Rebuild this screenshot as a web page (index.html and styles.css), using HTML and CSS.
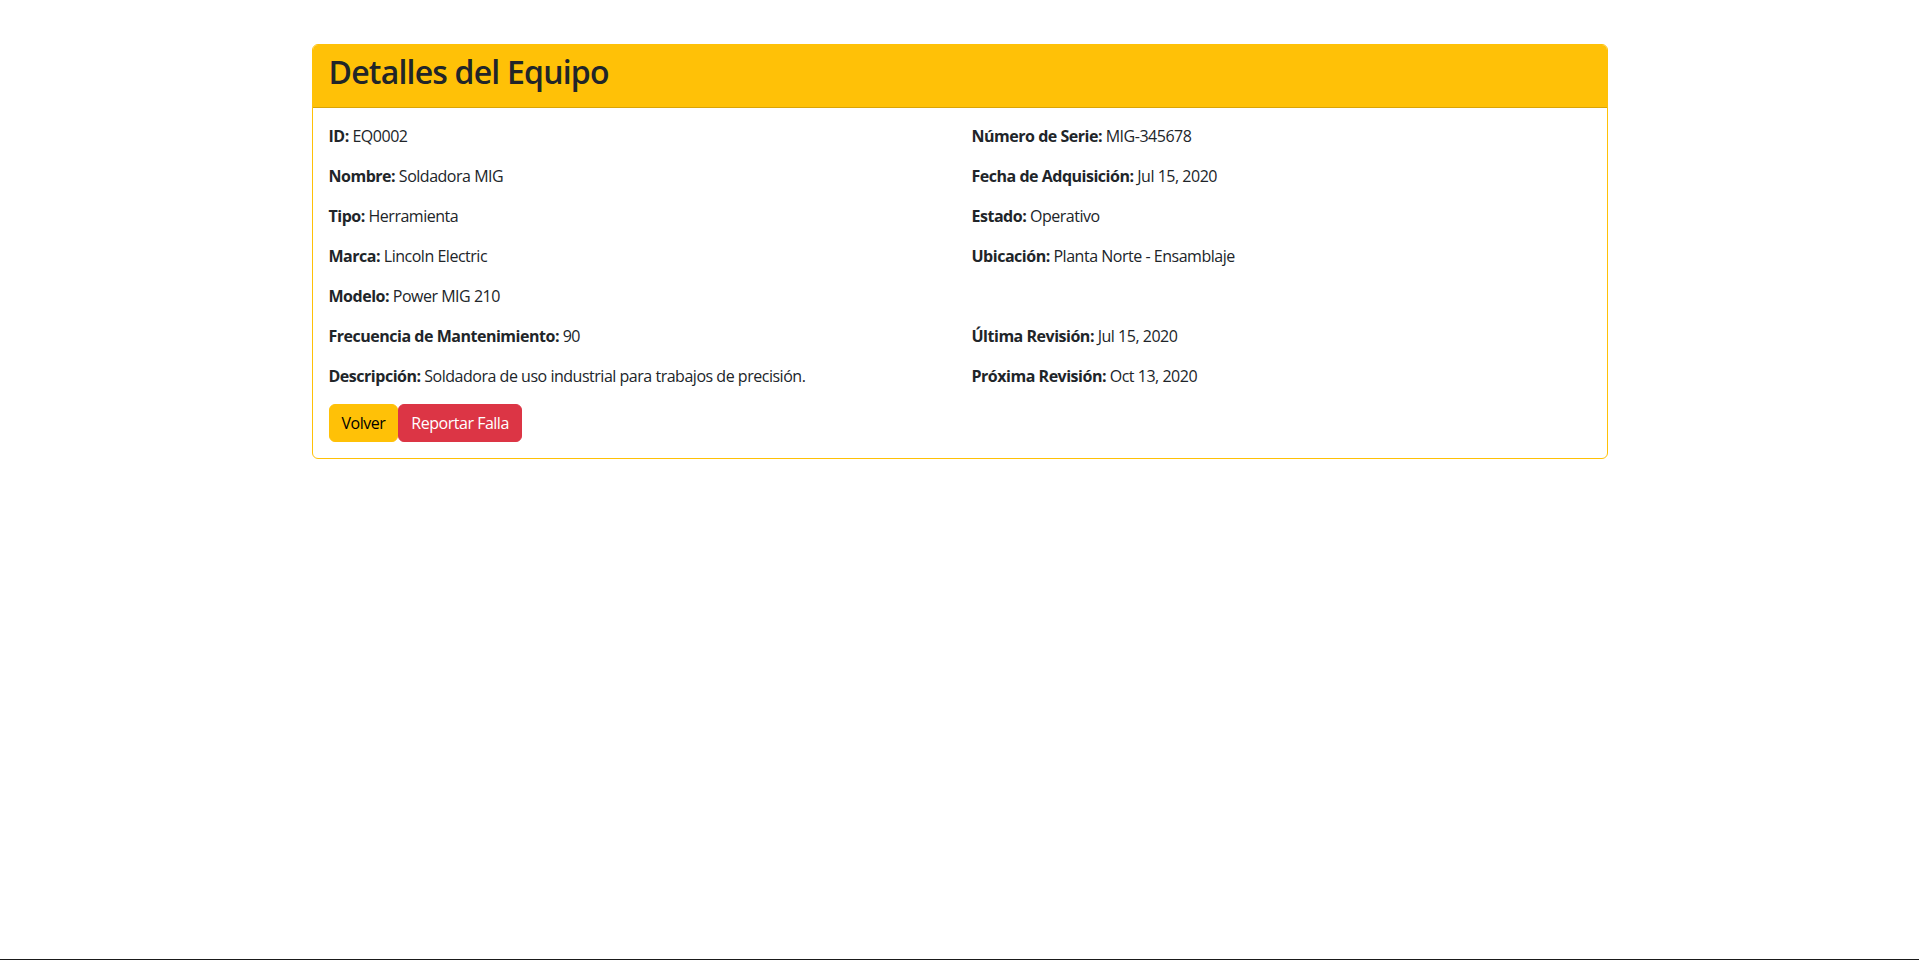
FILE: index.html
```html
<!DOCTYPE html>
<html lang="es">
<head>
<meta charset="utf-8">
<title>Detalles del Equipo</title>
<link rel="stylesheet" href="styles.css">
</head>
<body>
<main class="container">
  <section class="card">
    <header class="card-header">
      <h2 class="card-title">Detalles del Equipo</h2>
    </header>
    <div class="card-body">
      <div class="details">
        <p><strong>ID:</strong> EQ0002</p>
        <p><strong>Número de Serie:</strong> MIG-345678</p>
        <p><strong>Nombre:</strong> Soldadora MIG</p>
        <p><strong>Fecha de Adquisición:</strong> Jul 15, 2020</p>
        <p><strong>Tipo:</strong> Herramienta</p>
        <p><strong>Estado:</strong> Operativo</p>
        <p><strong>Marca:</strong> Lincoln Electric</p>
        <p><strong>Ubicación:</strong> Planta Norte - Ensamblaje</p>
        <p><strong>Modelo:</strong> Power MIG 210</p>
        <p class="empty"></p>
        <p><strong>Frecuencia de Mantenimiento:</strong> 90</p>
        <p><strong>Última Revisión:</strong> Jul 15, 2020</p>
        <p><strong>Descripción:</strong> Soldadora de uso industrial para trabajos de precisión.</p>
        <p><strong>Próxima Revisión:</strong> Oct 13, 2020</p>
      </div>
      <div class="actions">
        <a class="btn btn-warning" href="#">Volver</a>
        <a class="btn btn-danger" href="#">Reportar Falla</a>
      </div>
    </div>
  </section>
</main>
<footer class="bottom-line"></footer>
</body>
</html>
```

FILE: styles.css
```css
* { box-sizing: border-box; }
html, body { margin: 0; padding: 0; }
body {
  font-family: "Open Sans", "Noto Sans", "Liberation Sans", sans-serif;
  font-size: 16px;
  line-height: 24px;
  letter-spacing: -0.03em;
  color: #212529;
  background: #fff;
  min-height: 960px;
  display: flex;
  flex-direction: column;
}
.container {
  width: 1320px;
  margin: 44px auto 0;
  padding: 0 12px;
}
.card {
  border: 1px solid #ffc107;
  border-radius: 6px;
  overflow: hidden;
}
.card-header {
  background: #ffc107;
  padding: 8px 16px;
  border-bottom: 1px solid #d9a406;
}
.card-title {
  margin: 0 0 8px;
  font-size: 32px;
  font-weight: 600;
  line-height: 38px;
  letter-spacing: -0.025em;
}
.card-body {
  padding: 16px;
}
.details {
  display: grid;
  grid-template-columns: 1fr 1fr;
  column-gap: 24px;
}
.details p {
  margin: 0 0 16px;
  min-height: 24px;
}
.details strong { font-weight: 700; }
.actions { display: flex; }
.btn {
  display: inline-block;
  padding: 6px 12px;
  font-size: 16px;
  line-height: 24px;
  border-radius: 6px;
  text-decoration: none;
  border: 1px solid transparent;
}
.btn-warning { background: #ffc107; border-color: #ffc107; color: #000; }
.btn-danger { background: #dc3545; border-color: #dc3545; color: #fff; }
.bottom-line {
  margin-top: auto;
  height: 1px;
  background: #1a1a1a;
}
```
